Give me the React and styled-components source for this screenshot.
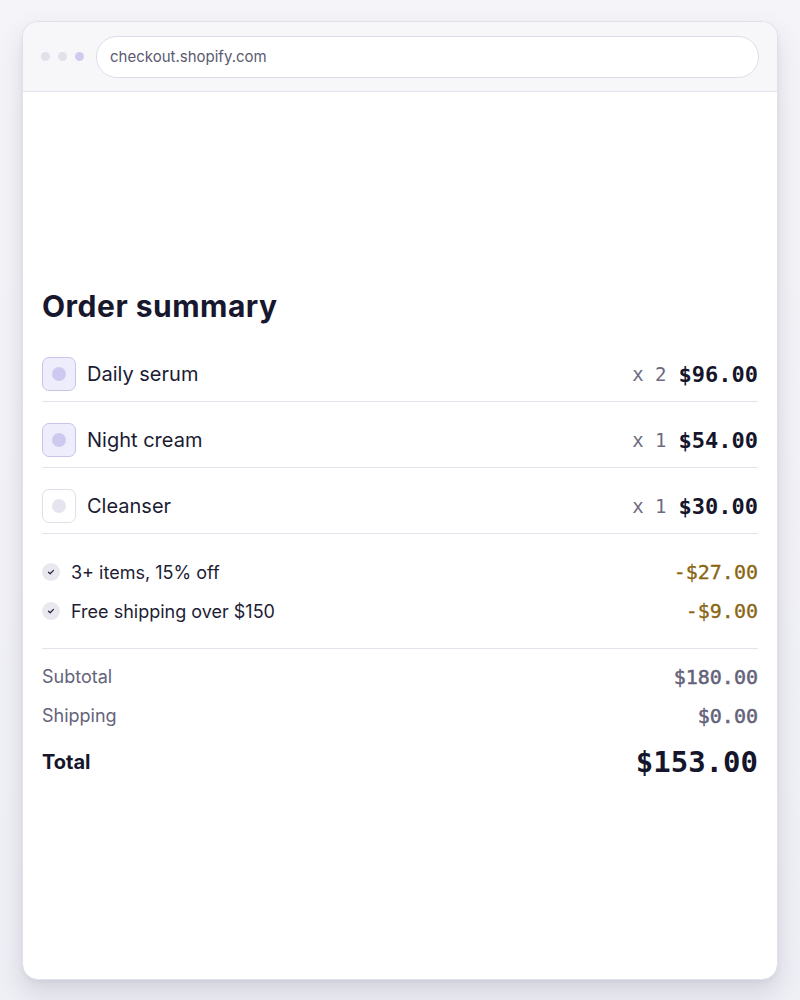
import React from "react";
import styled, { createGlobalStyle } from "styled-components";

const GlobalStyle = createGlobalStyle`
  html, body {
    margin: 0;
    padding: 0;
    background: #f3f3f8;
    font-family: Inter, "Noto Sans", sans-serif;
  }
`;

const Page = styled.div`
  width: 800px;
  height: 1000px;
  padding: 21px 22px 22px;
  box-sizing: border-box;
  background: linear-gradient(180deg, #f5f5f9 0%, #efeff6 100%);
`;

const Window = styled.div`
  height: 957px;
  display: flex;
  flex-direction: column;
  background: #fff;
  border: 1px solid #e1e0ec;
  border-radius: 16px;
  overflow: hidden;
  box-shadow: 0 12px 26px rgba(60, 60, 90, 0.16), 0 2px 4px rgba(60, 60, 90, 0.06);
`;

const TitleBar = styled.div`
  display: flex;
  align-items: center;
  gap: 12px;
  height: 69px;
  padding: 0 18px;
  background: #f7f7fa;
  border-bottom: 1px solid #e3e2ee;
`;

const Dots = styled.div`
  display: flex;
  gap: 8px;
`;

const Dot = styled.span`
  width: 9px;
  height: 9px;
  border-radius: 50%;
  background: ${(p) => (p.$active ? "#cfcbef" : "#e2e1ea")};
`;

const UrlBar = styled.div`
  flex: 1;
  height: 40px;
  display: flex;
  align-items: center;
  padding: 0 13px;
  background: #fff;
  border: 1px solid #dddcea;
  border-radius: 21px;
  font-size: 15px;
  color: #5b5a70;
`;

const Content = styled.div`
  padding: 196px 19px 0;
`;

const Heading = styled.h1`
  margin: 0 0 12px;
  font-size: 30px;
  font-weight: 700;
  letter-spacing: 0.5px;
  color: #17172e;
`;

const ItemRow = styled.div`
  display: flex;
  align-items: center;
  padding: 21px 0 10px;
  border-bottom: 1px solid #e4e3ec;
`;

const Thumb = styled.div`
  width: 32px;
  height: 32px;
  border-radius: 7px;
  border: 1px solid ${(p) => (p.$filled ? "#c8c4ea" : "#e0dfe8")};
  background: ${(p) => (p.$filled ? "#eeedfb" : "#fff")};
  display: flex;
  align-items: center;
  justify-content: center;
  margin-right: 11px;
`;

const ThumbDot = styled.span`
  width: 14px;
  height: 14px;
  border-radius: 50%;
  background: ${(p) => (p.$filled ? "#cdc9f1" : "#e6e5ef")};
`;

const ItemName = styled.span`
  flex: 1;
  font-size: 20px;
  color: #1b1b33;
`;

const Mono = styled.span`
  font-family: "DejaVu Sans Mono", monospace;
`;

const Qty = styled(Mono)`
  font-size: 19px;
  color: #6c6b80;
  margin-right: 12px;
`;

const Price = styled(Mono)`
  font-size: 22px;
  font-weight: 700;
  color: #15152b;
`;

const Discounts = styled.div`
  display: flex;
  flex-direction: column;
  gap: 17px;
  padding: 27px 0 26px;
  border-bottom: 1px solid #e4e3ec;
`;

const DiscountRow = styled.div`
  display: flex;
  align-items: center;
  height: 22px;
`;

const CheckCircle = styled.span`
  width: 18px;
  height: 18px;
  border-radius: 50%;
  background: #e9e8ef;
  display: flex;
  align-items: center;
  justify-content: center;
  margin-right: 11px;
`;

const DiscountLabel = styled.span`
  flex: 1;
  font-size: 18px;
  color: #1d1d35;
`;

const DiscountAmount = styled(Mono)`
  font-size: 20px;
  color: #8a6512;
  -webkit-text-stroke: 0.3px #8a6512;
`;

const Totals = styled.div`
  display: flex;
  flex-direction: column;
  padding-top: 8px;
`;

const TotalRow = styled.div`
  display: flex;
  align-items: center;
  justify-content: space-between;
  height: ${(p) => (p.$big ? "48px" : "39px")};
  margin-top: ${(p) => (p.$big ? "3px" : "0")};
`;

const TotalLabel = styled.span`
  font-size: ${(p) => (p.$big ? "20px" : "18px")};
  font-weight: ${(p) => (p.$big ? 700 : 400)};
  color: ${(p) => (p.$big ? "#15152b" : "#64637a")};
`;

const TotalValue = styled(Mono)`
  font-size: ${(p) => (p.$big ? "29px" : "20px")};
  font-weight: ${(p) => (p.$big ? 700 : 400)};
  color: ${(p) => (p.$big ? "#15152b" : "#64637a")};
  -webkit-text-stroke: ${(p) => (p.$big ? "0" : "0.5px #64637a")};
`;

const items = [
  { name: "Daily serum", qty: 2, price: "$96.00", filled: true },
  { name: "Night cream", qty: 1, price: "$54.00", filled: true },
  { name: "Cleanser", qty: 1, price: "$30.00", filled: false },
];

const discounts = [
  { label: "3+ items, 15% off", amount: "-$27.00" },
  { label: "Free shipping over $150", amount: "-$9.00" },
];

function Check() {
  return (
    <svg width="10" height="10" viewBox="0 0 10 10" fill="none">
      <path d="M2.5 5.2 L4.2 6.8 L7.5 3.4" stroke="#2a2a40" strokeWidth="1.3" strokeLinecap="round" strokeLinejoin="round" />
    </svg>
  );
}

export default function App() {
  return (
    <>
      <GlobalStyle />
      <Page>
        <Window>
          <TitleBar>
            <Dots>
              <Dot />
              <Dot />
              <Dot $active />
            </Dots>
            <UrlBar>checkout.shopify.com</UrlBar>
          </TitleBar>
          <Content>
            <Heading>Order summary</Heading>
            {items.map((it) => (
              <ItemRow key={it.name}>
                <Thumb $filled={it.filled}>
                  <ThumbDot $filled={it.filled} />
                </Thumb>
                <ItemName>{it.name}</ItemName>
                <Qty>x {it.qty}</Qty>
                <Price>{it.price}</Price>
              </ItemRow>
            ))}
            <Discounts>
              {discounts.map((d) => (
                <DiscountRow key={d.label}>
                  <CheckCircle>
                    <Check />
                  </CheckCircle>
                  <DiscountLabel>{d.label}</DiscountLabel>
                  <DiscountAmount>{d.amount}</DiscountAmount>
                </DiscountRow>
              ))}
            </Discounts>
            <Totals>
              <TotalRow>
                <TotalLabel>Subtotal</TotalLabel>
                <TotalValue>$180.00</TotalValue>
              </TotalRow>
              <TotalRow>
                <TotalLabel>Shipping</TotalLabel>
                <TotalValue>$0.00</TotalValue>
              </TotalRow>
              <TotalRow $big>
                <TotalLabel $big>Total</TotalLabel>
                <TotalValue $big>$153.00</TotalValue>
              </TotalRow>
            </Totals>
          </Content>
        </Window>
      </Page>
    </>
  );
}
